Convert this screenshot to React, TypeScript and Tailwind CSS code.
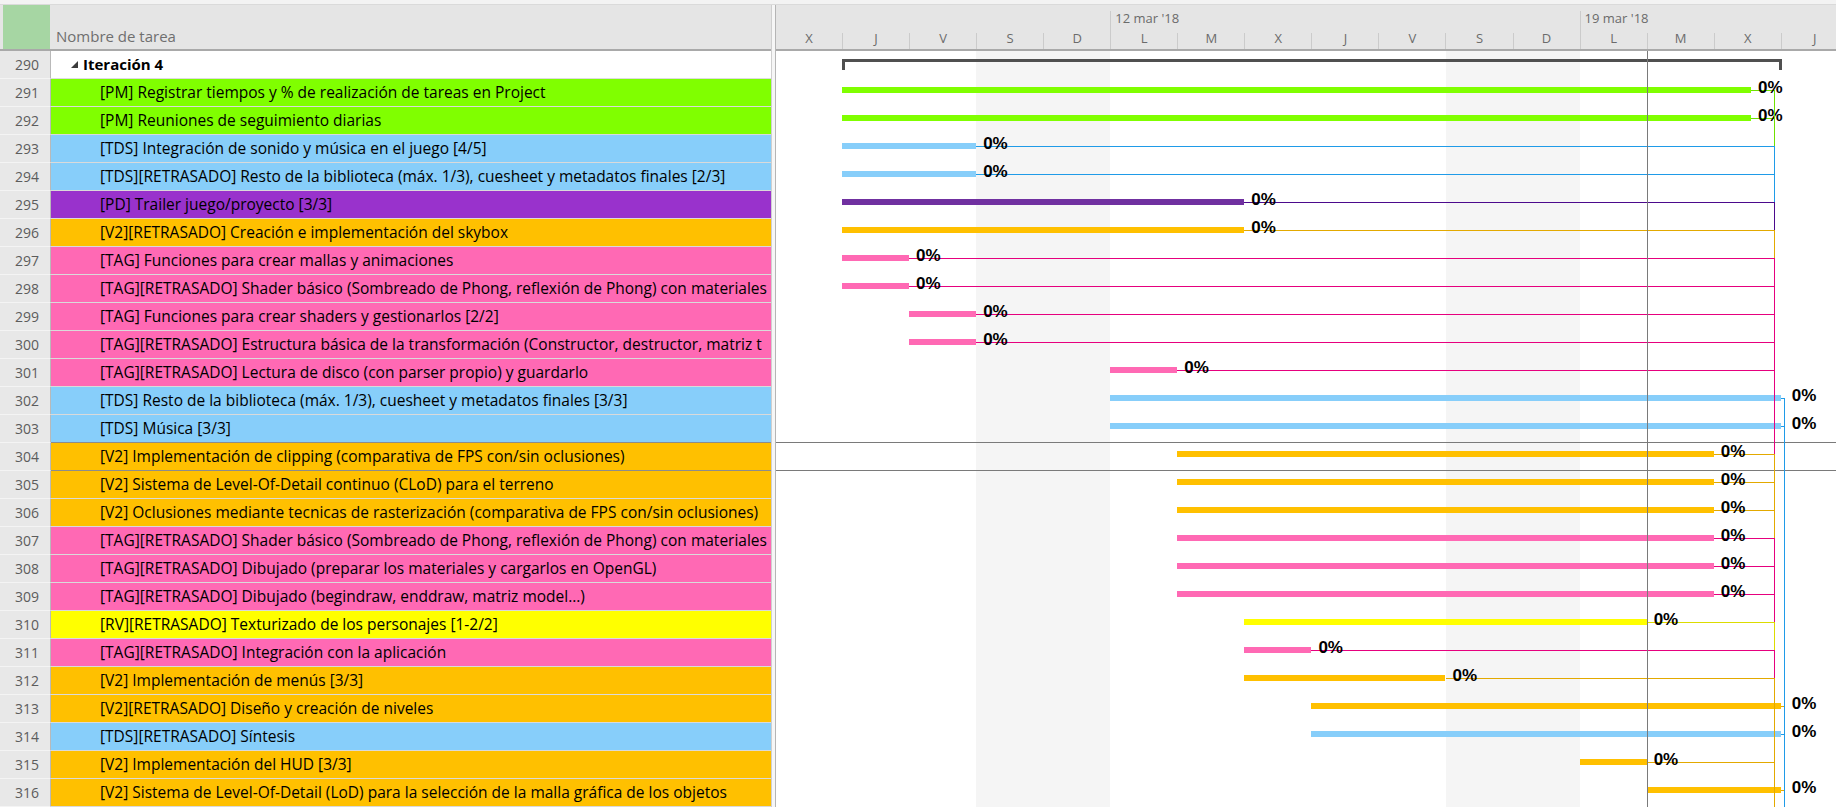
import React from 'react';

const DAY = 67.05;
// gantt body starts at x=776; day boundary i sits at 775 + i*DAY
const b = (i: number) => i * DAY - 1;
const DEP_X = 998;
const BLUE_X = 1008;
const ROW = 28;

type Tone = 'green' | 'blue' | 'purple' | 'orange' | 'pink' | 'yellow';

const tones: Record<Tone, { cell: string; bar: string; line: string }> = {
  green: { cell: 'bg-[#80ff00]', bar: 'bg-[#80ff00]', line: 'bg-[#6fe000]' },
  blue: { cell: 'bg-[#87cefa]', bar: 'bg-[#87cefa]', line: 'bg-[#1f9be8]' },
  purple: { cell: 'bg-[#9932cc]', bar: 'bg-[#7030a0]', line: 'bg-[#4b0a8c]' },
  orange: { cell: 'bg-[#ffc000]', bar: 'bg-[#ffc000]', line: 'bg-[#e3a900]' },
  pink: { cell: 'bg-[#ff69b4]', bar: 'bg-[#ff69b4]', line: 'bg-[#e6007e]' },
  yellow: { cell: 'bg-[#ffff00]', bar: 'bg-[#ffff00]', line: 'bg-[#dcdc00]' },
};

type Task = { n: number; name: string; tone: Tone; s: number; e: number; hook?: boolean };

const tasks: Task[] = [
  { n: 291, name: '[PM] Registrar tiempos y % de realización de tareas en Project', tone: 'green', s: b(1), e: 975 },
  { n: 292, name: '[PM] Reuniones de seguimiento diarias', tone: 'green', s: b(1), e: 975 },
  { n: 293, name: '[TDS] Integración de sonido y música en el juego [4/5]', tone: 'blue', s: b(1), e: b(3) },
  { n: 294, name: '[TDS][RETRASADO] Resto de la biblioteca (máx. 1/3), cuesheet y metadatos finales [2/3]', tone: 'blue', s: b(1), e: b(3) },
  { n: 295, name: '[PD] Trailer juego/proyecto [3/3]', tone: 'purple', s: b(1), e: b(7) },
  { n: 296, name: '[V2][RETRASADO] Creación e implementación del skybox', tone: 'orange', s: b(1), e: b(7) },
  { n: 297, name: '[TAG] Funciones para crear mallas y animaciones', tone: 'pink', s: b(1), e: b(2) },
  { n: 298, name: '[TAG][RETRASADO] Shader básico (Sombreado de Phong, reflexión de Phong) con materiales', tone: 'pink', s: b(1), e: b(2) },
  { n: 299, name: '[TAG] Funciones para crear shaders y gestionarlos [2/2]', tone: 'pink', s: b(2), e: b(3) },
  { n: 300, name: '[TAG][RETRASADO] Estructura básica de la transformación (Constructor, destructor, matriz t', tone: 'pink', s: b(2), e: b(3) },
  { n: 301, name: '[TAG][RETRASADO] Lectura de disco (con parser propio) y guardarlo', tone: 'pink', s: b(5), e: b(6) },
  { n: 302, name: '[TDS] Resto de la biblioteca (máx. 1/3), cuesheet y metadatos finales [3/3]', tone: 'blue', s: b(5), e: b(15), hook: true },
  { n: 303, name: '[TDS] Música [3/3]', tone: 'blue', s: b(5), e: b(15), hook: true },
  { n: 304, name: '[V2] Implementación de clipping (comparativa de FPS con/sin oclusiones)', tone: 'orange', s: b(6), e: b(14) },
  { n: 305, name: '[V2] Sistema de Level-Of-Detail continuo (CLoD) para el terreno', tone: 'orange', s: b(6), e: b(14) },
  { n: 306, name: '[V2] Oclusiones mediante tecnicas de rasterización (comparativa de FPS con/sin oclusiones)', tone: 'orange', s: b(6), e: b(14) },
  { n: 307, name: '[TAG][RETRASADO] Shader básico (Sombreado de Phong, reflexión de Phong) con materiales', tone: 'pink', s: b(6), e: b(14) },
  { n: 308, name: '[TAG][RETRASADO] Dibujado (preparar los materiales y cargarlos en OpenGL)', tone: 'pink', s: b(6), e: b(14) },
  { n: 309, name: '[TAG][RETRASADO] Dibujado (begindraw, enddraw, matriz model...)', tone: 'pink', s: b(6), e: b(14) },
  { n: 310, name: '[RV][RETRASADO] Texturizado de los personajes [1-2/2]', tone: 'yellow', s: b(7), e: b(13) },
  { n: 311, name: '[TAG][RETRASADO] Integración con la aplicación', tone: 'pink', s: b(7), e: b(8) },
  { n: 312, name: '[V2] Implementación de menús [3/3]', tone: 'orange', s: b(7), e: b(10) },
  { n: 313, name: '[V2][RETRASADO] Diseño y creación de niveles', tone: 'orange', s: b(8), e: b(15), hook: true },
  { n: 314, name: '[TDS][RETRASADO] Síntesis', tone: 'blue', s: b(8), e: b(15), hook: true },
  { n: 315, name: '[V2] Implementación del HUD [3/3]', tone: 'orange', s: b(12), e: b(13) },
  { n: 316, name: '[V2] Sistema de Level-Of-Detail (LoD) para la selección de la malla gráfica de los objetos', tone: 'orange', s: b(13), e: b(15), hook: true },
];

// vertical links at the right end, from one row's line to another's
const links: [number, number, Tone][] = [
  [291, 293, 'green'],
  [293, 295, 'blue'],
  [295, 296, 'purple'],
  [296, 297, 'orange'],
  [297, 304, 'pink'],
  [304, 307, 'orange'],
  [307, 310, 'pink'],
  [310, 311, 'yellow'],
  [311, 312, 'pink'],
  [312, 317, 'orange'],
];

const lineY = (n: number) => Math.min((n - 290) * ROW + 11, 27 * ROW);

const days = ['X', 'J', 'V', 'S', 'D', 'L', 'M', 'X', 'J', 'V', 'S', 'D', 'L', 'M', 'X', 'J'];

function TaskTable() {
  return (
    <div className="w-[771px] flex flex-col shrink-0">
      <div className="h-[46px] flex bg-[#e5e5e5] border-b-2 border-[#a9a9a9]">
        <div className="w-[50px] pl-[3px]">
          <div className="h-full bg-[#a6d6a3]" />
        </div>
        <div className="flex-1 flex items-end pl-[6px] pb-[2px] text-[15px] text-[#6f6f6f]">Nombre de tarea</div>
      </div>

      <div className="h-[28px] flex">
        <div className="w-[51px] bg-[#e8e8e8] border-r border-b border-r-[#b9b9b9] border-b-[#f4f4f4] flex items-center justify-end pr-[11px] text-[14px] text-[#5c5c5c]">290</div>
        <div className="flex-1 flex items-center bg-white border-b border-[#dcdcdc] pl-[20px] gap-[5px]">
          <svg width="7" height="7" viewBox="0 0 7 7">
            <polygon points="7,0 7,7 0,7" fill="#3c3c3c" />
          </svg>
          <span className="font-bold text-[15px] text-black">Iteración 4</span>
        </div>
      </div>

      {tasks.map((t) => {
        const sel = t.n === 304;
        const before = t.n === 303;
        return (
          <div key={t.n} className="h-[28px] flex">
            <div className="w-[51px] bg-[#e8e8e8] border-r border-b border-r-[#b9b9b9] border-b-[#f4f4f4] flex items-center justify-end pr-[11px] text-[14px] text-[#5c5c5c]">
              {t.n}
            </div>
            <div
              className={`flex-1 min-w-0 flex items-center pl-[49px] border-b overflow-hidden whitespace-nowrap text-[15.5px] text-black ${tones[t.tone].cell} ${sel || before ? 'border-[#8c8c8c]' : 'border-[#dadada]'}`}
            >
              {t.name}
            </div>
          </div>
        );
      })}
    </div>
  );
}

function TimeScale() {
  return (
    <div className="h-[46px] flex flex-col bg-[#e5e5e5] border-b-2 border-[#a9a9a9] text-[13px] text-[#6b6b6b]">
      <div className="h-[28px] flex">
        <div className="w-[334.25px] shrink-0" />
        <div className="w-[469.35px] shrink-0 mt-[6px] border-l border-[#cbcbcb] pl-[4px] leading-none pt-[1px]">12 mar '18</div>
        <div className="flex-1 mt-[6px] border-l border-[#cbcbcb] pl-[4px] leading-none pt-[1px]">19 mar '18</div>
      </div>
      <div className="flex-1 flex">
        {days.map((d, i) => (
          <div
            key={i}
            className={`shrink-0 text-center leading-none ${i === 0 ? 'w-[66.05px]' : 'w-[67.05px] border-l border-[#cbcbcb]'}`}
          >
            <span className="relative -top-[1px]">{d}</span>
          </div>
        ))}
      </div>
    </div>
  );
}

function Chart() {
  return (
    <div className="relative flex-1 overflow-hidden">
      {/* weekends */}
      <div className="absolute top-0 bottom-0 bg-[#f5f5f5]" style={{ left: b(3), width: 2 * DAY }} />
      <div className="absolute top-0 bottom-0 bg-[#f5f5f5]" style={{ left: b(10), width: 2 * DAY }} />

      {/* summary row */}
      <div className="relative h-[28px]">
        <div className="absolute top-[8px] h-[3px] bg-[#505050]" style={{ left: b(1), width: b(15) - b(1) + 1 }} />
        <div className="absolute top-[8px] h-[11px] w-[3px] bg-[#505050]" style={{ left: b(1) }} />
        <div className="absolute top-[8px] h-[11px] w-[3px] bg-[#505050]" style={{ left: b(15) - 2 }} />
      </div>

      {tasks.map((t) => {
        const tone = tones[t.tone];
        const lineEnd = t.hook ? BLUE_X : DEP_X;
        return (
          <div key={t.n} className="relative h-[28px]">
            <div className={`absolute top-[11px] h-px ${tone.line}`} style={{ left: t.e, width: lineEnd - t.e }} />
            <div className={`absolute top-[8px] h-[6px] ${tone.bar}`} style={{ left: t.s, width: t.e - t.s }} />
            <span
              className="absolute top-[1px] leading-4 text-[17px] font-bold text-black font-['Liberation_Sans',Arial,sans-serif]"
              style={{ left: t.e + (t.hook ? 11 : 7) }}
            >
              0%
            </span>
          </div>
        );
      })}

      {/* selected row borders */}
      <div className="absolute left-0 right-0 top-[391px] h-px bg-[#7a7a7a]" />
      <div className="absolute left-0 right-0 top-[419px] h-px bg-[#7a7a7a]" />

      {/* status date */}
      <div className="absolute top-0 bottom-0 w-px bg-[#7a7a7a]" style={{ left: b(13) }} />

      {/* link lines */}
      {links.map(([a, z, tone]) => (
        <div
          key={a}
          className={`absolute w-px ${tones[tone].line}`}
          style={{ left: DEP_X, top: lineY(a), height: lineY(z) - lineY(a) + 1 }}
        />
      ))}
      <div className={`absolute w-px bottom-0 ${tones.blue.line}`} style={{ left: BLUE_X, top: lineY(302) }} />
    </div>
  );
}

export default function App() {
  return (
    <div className="w-[1836px] h-[807px] overflow-hidden bg-white flex flex-col font-['Open_Sans',sans-serif]">
      <div className="h-[5px] shrink-0 bg-[#f3f3f3] border-b border-[#dadada]" />
      <div className="flex-1 flex min-h-0">
        <TaskTable />
        <div className="w-[5px] shrink-0 bg-[#f6f6f6] border-l border-r border-l-[#cfcfcf] border-r-[#b5b5b5]" />
        <div className="flex-1 flex flex-col min-w-0">
          <TimeScale />
          <Chart />
        </div>
      </div>
    </div>
  );
}
